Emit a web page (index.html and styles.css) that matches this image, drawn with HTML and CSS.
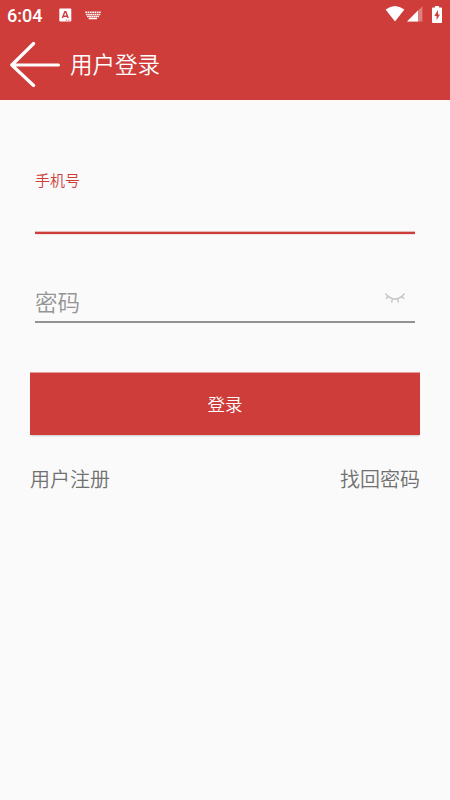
FILE: index.html
```html
<!DOCTYPE html>
<html lang="zh-CN">
<head>
<meta charset="utf-8">
<title>用户登录</title>
<link rel="stylesheet" href="styles.css">
</head>
<body>
<header class="header">
  <div class="status">
    <span class="clock">6:04</span>
    <svg class="app-icon" width="13" height="14" viewBox="0 0 13 14"><rect x="0.3" y="0.5" width="12" height="13" rx="1" fill="#fff"/><path d="M3.4 10 5.8 3.8h1l2.4 6.2M4.4 8.2h3.8" fill="none" stroke="#ce3d3a" stroke-width="1.4"/><path d="M6.7 12.2h1.2M9 12.2h1.5" stroke="#ce3d3a" stroke-width=".7"/></svg>
    <svg class="keyboard" width="16" height="9" viewBox="0 0 16 9" fill="none" stroke="#fff"><path d="M.3 1.3h15.4" stroke-width="1.5" stroke-dasharray="1.7 .6"/><path d="M.9 3.4h14.4" stroke-width="1.5" stroke-dasharray="1.7 .5"/><path d="M2 5.4h12" stroke-width="1.5" stroke-dasharray="1.8 .4"/><path d="M3.7 7.5h8.4" stroke-width="1.5"/></svg>
    <div class="indicators">
      <svg width="20" height="16" viewBox="0 0 20 16"><path d="M.6 3.6Q10-3.4 19.4 3.6L10 15.4Z" fill="#fff"/></svg>
      <svg width="16" height="16" viewBox="0 0 16 16"><path d="M15.4.2v15.4H0Z" fill="#fff" opacity=".35"/><path d="M11 4.6v11H0Z" fill="#fff"/></svg>
      <svg class="battery" width="10" height="17" viewBox="0 0 10 17"><path d="M3 0h4v1.6h2q1 0 1 1V16q0 1-1 1H1q-1 0-1-1V2.6q0-1 1-1h2Z" fill="#fff"/><path d="M6 4 2.3 9.9h2.3V14L8 8.4H6Z" fill="#ce3d3a"/></svg>
    </div>
  </div>
  <div class="toolbar">
    <svg class="back" width="50" height="46" viewBox="0 0 50 46"><path d="M23.6 2.5 1.8 24l21.8 20.5M1.8 24h46.6" fill="none" stroke="#fff" stroke-width="3.2" stroke-linecap="round" stroke-linejoin="round"/></svg>
    <h1 class="title">用户登录</h1>
  </div>
</header>
<main class="form">
  <div class="field phone"><label class="phone-label">手机号</label></div>
  <div class="field password">
    <label class="password-label">密码</label>
    <svg class="eye" width="20" height="12" viewBox="0 0 20 12"><path d="M.8 2Q10 12 19.2 2M3.1 4.2 1.3 6.5M7.4 6.7l-.7 3.2M12.6 6.7l.7 3.2M16.9 4.2l1.8 2.3" fill="none" stroke="#c8c8c8" stroke-width="1.5" stroke-linecap="round"/></svg>
  </div>
  <button class="login" type="button">登录</button>
  <nav class="links"><span>用户注册</span><span>找回密码</span></nav>
</main>
</body>
</html>
```
FILE: styles.css
```css
* { box-sizing: border-box; }
body {
  margin: 0;
  min-height: 800px;
  background: #fafafa;
  font-family: "Noto Sans CJK SC", sans-serif;
  font-weight: 350;
}
svg { display: block; flex: none; }
.header { height: 100px; background: #ce3d3a; color: #fff; }
.status { height: 30px; display: flex; align-items: center; padding: 0 8px 0 7px; }
.clock { width: 52px; font: 500 18px/30px Roboto, sans-serif; padding-top: 2px; }
.keyboard { margin-left: 13px; }
.indicators { display: flex; align-items: center; margin-left: auto; }
.indicators svg + svg { margin-left: 2px; }
.indicators .battery { margin-left: 9px; }
.indicators { padding-bottom: 2px; }
.toolbar { height: 70px; display: flex; align-items: center; padding: 0 10px; }
.back { margin-bottom: 2px; }
.title { margin: 0 0 4px 10px; font-size: 22.5px; line-height: 34px; font-weight: 350; }
.form { padding: 66px 30px 0; }
.field { margin: 0 5px; }
.phone {
  height: 68px;
  border-bottom: 2px solid #ce3d3a;
  box-shadow: inset 0 -1px #e9b9b8, 0 1px #f5e4e4;
}
.phone-label { display: block; color: #ce3d3a; font-size: 15px; line-height: 28px; }
.password {
  height: 39px;
  margin-top: 50px;
  display: flex;
  justify-content: space-between;
  border-bottom: 2px solid #929292;
}
.password-label { color: #949494; font-size: 22.5px; line-height: 34px; }
.eye { margin: 8px 10px 0 0; }
.login {
  display: block;
  width: 100%;
  height: 62px;
  margin-top: 50px;
  padding: 0;
  border: 0;
  background: #ce3d3a;
  box-shadow: 0 -1px #e39e9c, 0 2px 2px -1px #0003;
  color: #fff;
  font: 350 17.5px/62px "Noto Sans CJK SC", sans-serif;
}
.links {
  display: flex;
  justify-content: space-between;
  margin-top: 29px;
  color: #707070;
  font-size: 20px;
  line-height: 30px;
}
```
